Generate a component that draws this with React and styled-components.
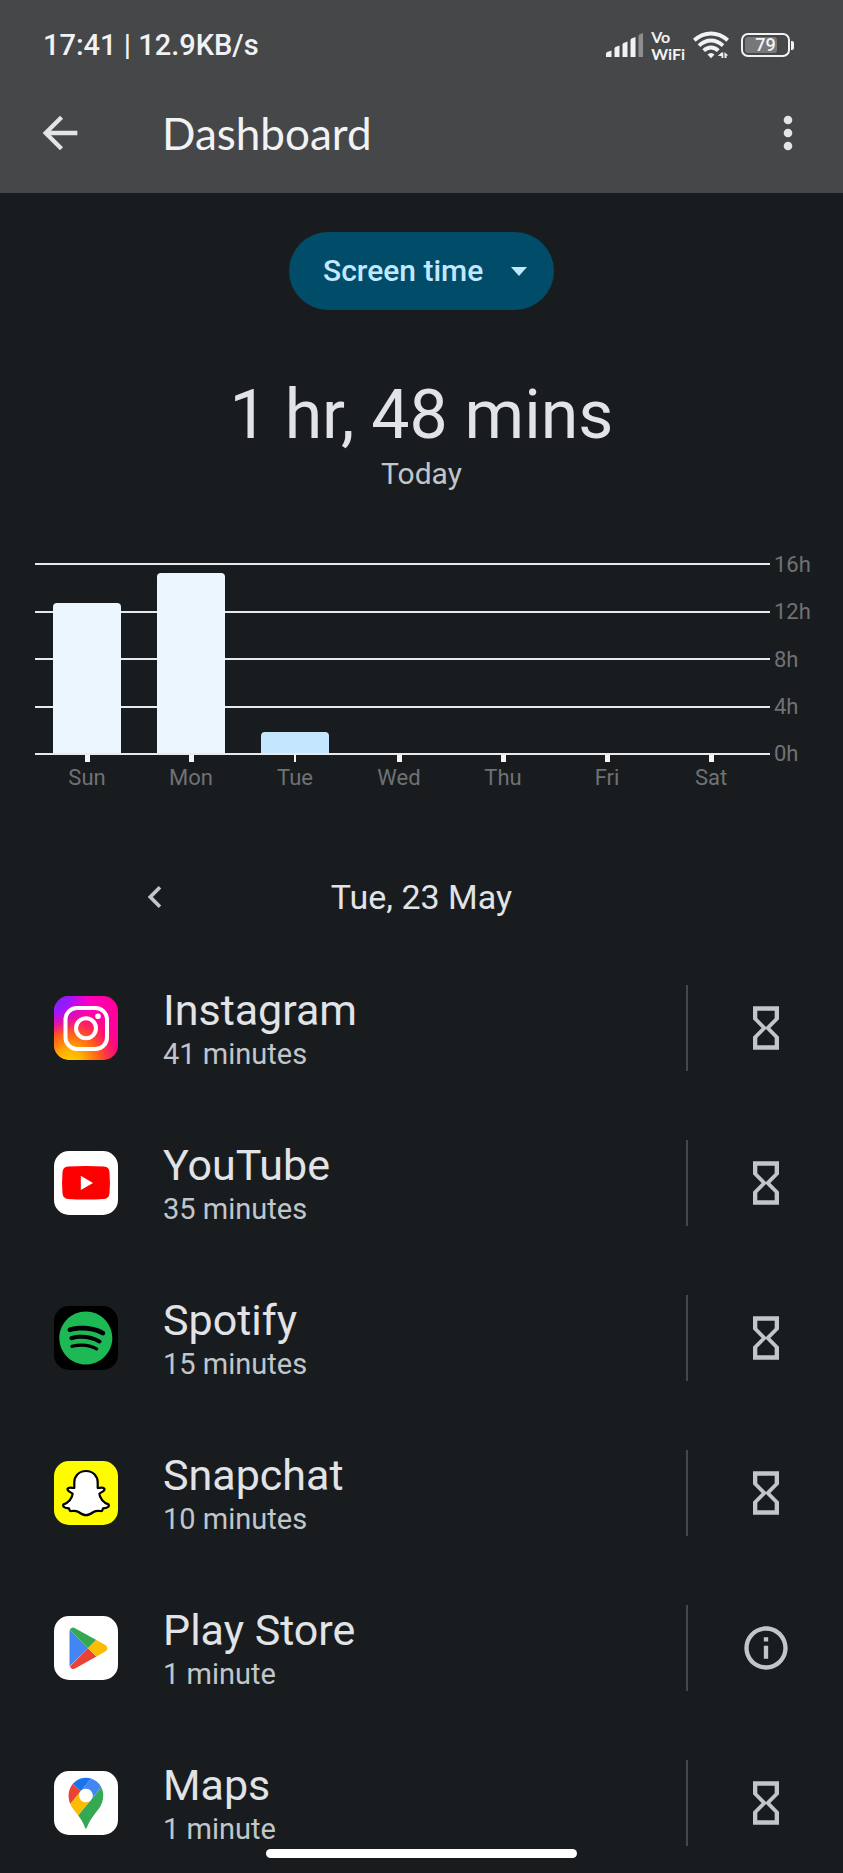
import React from 'react';
import styled, { createGlobalStyle } from 'styled-components';
import {
  MdArrowBack,
  MdChevronLeft,
  MdHourglassEmpty,
  MdInfoOutline,
  MdMoreVert,
} from 'react-icons/md';

const GlobalStyle = createGlobalStyle`
  * { box-sizing: border-box; }
  body {
    margin: 0;
    background: #191c1f;
    color: #e1e3e7;
    font-family: Roboto, "Liberation Sans", sans-serif;
  }
`;

const Screen = styled.div`
  display: flex;
  flex-direction: column;
  height: 100vh;
  background: #191c1f;
`;

const Header = styled.header`
  flex: none;
  padding-top: 17px;
  background: #464749;
`;

const StatusBar = styled.div`
  display: flex;
  align-items: center;
  justify-content: space-between;
  height: 56px;
  padding: 0 49px 0 43px;
  color: #f1f2f4;
  font-size: 29px;
  font-weight: 500;
`;

const StatusIcons = styled.div`
  display: flex;
  align-items: center;
  gap: 8px;
`;

const VoWifi = styled.span`
  display: flex;
  flex-direction: column;
  font-family: Lato, sans-serif;
  font-size: 16px;
  font-weight: 700;
  line-height: 17px;
`;

const Battery = styled.span`
  display: flex;
  align-items: center;
  gap: 1px;
  margin-left: 4px;
`;

const BatteryCase = styled.span`
  display: grid;
  width: 49px;
  height: 24px;
  padding: 2px;
  border: 2px solid #f1f2f4;
  border-radius: 7px;
`;

const BatteryLevel = styled.span`
  grid-area: 1 / 1;
  width: ${(p) => p.$percent}%;
  border-radius: 3px;
  background: #77787a;
`;

const BatteryText = styled.span`
  grid-area: 1 / 1;
  font-size: 18px;
  line-height: 16px;
  text-align: center;
`;

const BatteryTip = styled.span`
  width: 3px;
  height: 9px;
  border-radius: 0 2px 2px 0;
  background: #f1f2f4;
`;

const AppBar = styled.div`
  display: flex;
  align-items: center;
  height: 120px;
  padding: 0 29px 0 34px;
`;

const IconButton = styled.button`
  display: grid;
  place-items: center;
  flex: none;
  width: 52px;
  height: 52px;
  padding: 0;
  border: 0;
  background: none;
  color: ${(p) => p.$color || '#e3e4e6'};
  cursor: pointer;
`;

const Title = styled.h1`
  flex: 1;
  margin: 0;
  padding-left: 76px;
  color: #f1f2f4;
  font-family: Lato, Roboto, sans-serif;
  font-size: 44px;
  font-weight: 400;
  line-height: 52px;
`;

const Main = styled.main`
  flex: 1;
  min-height: 0;
  padding-top: 39px;
  overflow-y: auto;
  scrollbar-width: none;
`;

const Picker = styled.div`
  display: grid;
  width: 265px;
  height: 78px;
  margin: 0 auto;
  border-radius: 39px;
  background: #004c69;
  color: #c2e8ff;
`;

const PickerSelect = styled.select`
  grid-area: 1 / 1;
  padding: 0 72px 2px 34px;
  border: 0;
  border-radius: 39px;
  appearance: none;
  background: transparent;
  color: inherit;
  font: 500 30px Roboto, sans-serif;
`;

const PickerArrow = styled.svg`
  grid-area: 1 / 1;
  place-self: center end;
  margin-right: 29px;
  pointer-events: none;
`;

const Total = styled.h2`
  margin: 65px 0 0;
  font-size: 68px;
  font-weight: 400;
  line-height: 80px;
  text-align: center;
`;

const TotalCaption = styled.p`
  margin: 0;
  color: #c1c6cb;
  font-size: 30px;
  line-height: 38px;
  text-align: center;
`;

const Chart = styled.section`
  display: grid;
  grid-template-columns: 1fr 69px;
  column-gap: 4px;
  margin-top: 58px;
  padding-left: 35px;
  color: #6f7275;
  font-size: 22px;
`;

const Plot = styled.div`
  display: grid;
  height: 192px;
  margin-top: 12px;
`;

const GridLines = styled.div`
  display: flex;
  flex-direction: column;
  justify-content: space-between;
  grid-area: 1 / 1;
`;

const GridLine = styled.div`
  height: 2px;
  background: #e8eaec;
`;

const Bars = styled.div`
  display: flex;
  grid-area: 1 / 1;
  padding: 2px 7px 2px 0;
`;

const BarSlot = styled.div`
  display: flex;
  align-items: flex-end;
  justify-content: center;
  flex: 1;
`;

const Bar = styled.div`
  width: 65%;
  border-radius: 4px 4px 0 0;
  background: ${(p) => (p.$selected ? '#c4e7ff' : '#ebf6ff')};
`;

const HourLabels = styled.div`
  display: flex;
  flex-direction: column;
  justify-content: space-between;
  height: 216px;
  margin-bottom: -12px;
  line-height: 27px;
`;

const Days = styled.div`
  display: flex;
  padding-right: 7px;
`;

const Day = styled.div`
  display: flex;
  flex: 1;
  flex-direction: column;
  align-items: center;
  gap: 2px;
  line-height: 28px;
`;

const Tick = styled.span`
  width: ${(p) => (p.$selected ? 2 : 5)}px;
  height: 7px;
  background: #f3f5f7;
`;

const DateNav = styled.nav`
  display: grid;
  grid-template-columns: 52px 1fr 52px;
  align-items: center;
  height: 56px;
  margin-top: 77px;
  padding: 0 129px;
  font-size: 34px;
  text-align: center;
`;

const AppList = styled.ul`
  margin: 25px 0 0;
  padding: 0;
  list-style: none;
`;

const AppRow = styled.li`
  display: flex;
  align-items: center;
  height: 155px;
  padding-left: 54px;
`;

const AppIcon = styled.svg`
  flex: none;
  width: 64px;
  height: 64px;
`;

const AppText = styled.div`
  flex: 1;
  padding: 2px 0 0 45px;
`;

const AppName = styled.div`
  font-size: 43px;
  line-height: 50px;
`;

const AppTime = styled.div`
  color: #c1c6cb;
  font-size: 29px;
  line-height: 38px;
`;

const AppAction = styled.div`
  display: grid;
  place-items: center;
  width: 157px;
  height: 86px;
  border-left: 2px solid #44484b;
`;

const HomeIndicator = styled.div`
  position: fixed;
  bottom: 15px;
  left: 0;
  right: 0;
  width: 37%;
  height: 9px;
  margin: 0 auto;
  border-radius: 5px;
  background: #fff;
`;

const Tile = ({ fill }) => <rect width="64" height="64" rx="15" fill={fill} />;

const InstagramIcon = () => (
  <AppIcon viewBox="0 0 64 64" aria-hidden="true">
    <defs>
      <linearGradient id="ig-base" x1="0" y1="0" x2="1" y2="0">
        <stop offset="0" stopColor="#d800d8" />
        <stop offset=".5" stopColor="#ff00c0" />
        <stop offset="1" stopColor="#ff0098" />
      </linearGradient>
      <radialGradient id="ig-warm" cx=".25" cy="1.05" r=".95">
        <stop offset="0" stopColor="#ffd600" />
        <stop offset=".22" stopColor="#ffb000" />
        <stop offset=".5" stopColor="#ff5a1c" />
        <stop offset=".75" stopColor="#ff1464" stopOpacity=".8" />
        <stop offset="1" stopColor="#ff00a0" stopOpacity="0" />
      </radialGradient>
      <radialGradient id="ig-cool" cx="0" cy="0" r=".6">
        <stop offset="0" stopColor="#6a2cff" />
        <stop offset=".4" stopColor="#9a18ff" />
        <stop offset="1" stopColor="#e000e0" stopOpacity="0" />
      </radialGradient>
    </defs>
    <Tile fill="url(#ig-base)" />
    <Tile fill="url(#ig-warm)" />
    <Tile fill="url(#ig-cool)" />
    <g fill="none" stroke="#fff" strokeWidth="4">
      <rect x="11.5" y="12" width="41.5" height="41" rx="11.5" />
      <circle cx="32" cy="32.3" r="10" />
    </g>
    <circle cx="44" cy="20.3" r="2.8" fill="#fff" />
  </AppIcon>
);

const YouTubeIcon = () => (
  <AppIcon viewBox="0 0 64 64" aria-hidden="true">
    <Tile fill="#fff" />
    <path
      fill="#f00"
      d="M14 15.6Q32 14.4 50 15.6Q55 16 55.5 21Q56.4 31.8 55.5 42.6Q55 47.6 50 48Q32 49.2 14 48Q9 47.6 8.5 42.6Q7.6 31.8 8.5 21Q9 16 14 15.6Z"
    />
    <path fill="#fff" d="M26.8 24.8v14.2L39 31.9z" />
  </AppIcon>
);

const SpotifyIcon = () => (
  <AppIcon viewBox="0 0 64 64" aria-hidden="true">
    <Tile fill="#000" />
    <path
      transform="translate(5.3 5.5) scale(2.21)"
      fill="#1db954"
      d="M12 0C5.4 0 0 5.4 0 12s5.4 12 12 12 12-5.4 12-12S18.66 0 12 0zm5.521 17.34c-.24.359-.66.48-1.021.24-2.82-1.74-6.36-2.101-10.561-1.141-.418.122-.779-.179-.899-.539-.12-.421.18-.78.54-.9 4.56-1.021 8.52-.6 11.64 1.32.42.18.479.659.301 1.02zm1.44-3.3c-.301.42-.841.6-1.262.3-3.239-1.98-8.159-2.58-11.939-1.38-.479.12-1.02-.12-1.14-.6-.12-.48.12-1.021.6-1.141C9.6 9.9 15 10.561 18.72 12.84c.361.181.54.78.241 1.2zm.12-3.36C15.24 8.4 8.82 8.16 5.16 9.301c-.6.179-1.2-.181-1.38-.721-.18-.601.18-1.2.72-1.381 4.26-1.26 11.28-1.02 15.721 1.621.539.3.719 1.02.419 1.56-.299.421-1.02.599-1.559.3z"
    />
  </AppIcon>
);

const SnapchatIcon = () => (
  <AppIcon viewBox="0 0 64 64" aria-hidden="true">
    <Tile fill="#fffc00" />
    <path
      fill="#fff"
      stroke="#000"
      strokeWidth="2.2"
      strokeLinejoin="round"
      d="M32 10C24.500 10 20.300 15.500 20.300 21.500V27C18 27 14.500 25.600 13.500 28C13 30.300 17 31 18.600 32.800C18.600 37 14 42 9.500 43.400C8 45.600 11 47 15 47.400C15.500 49.600 16 50.300 17.500 50C20 49.600 22 49.500 24.500 51C27 52.800 29 54.200 32 54.200C35 54.200 37 52.800 39.500 51C42 49.500 44 49.600 46.500 50C48 50.300 48.500 49.600 49 47.400C53 47 56 45.600 54.500 43.400C50 42 45.400 37 45.400 32.800C47 31 51 30.300 50.500 28C49.500 25.600 46 27 43.700 27V21.500C43.700 15.500 39.500 10 32 10Z"
    />
  </AppIcon>
);

const PlayStoreIcon = () => (
  <AppIcon viewBox="0 0 64 64" aria-hidden="true">
    <defs>
      <clipPath id="play-shape">
        <path d="M15.500 15.500Q15.500 12.500 18 11.700Q19.500 11.200 21.500 12.400L50.500 28.500Q53.500 30.300 53.500 32.200Q53.500 34.200 50.500 36L21.500 52.300Q19.500 53.400 18 52.900Q15.500 52 15.500 49Z" />
      </clipPath>
    </defs>
    <Tile fill="#fff" />
    <g clipPath="url(#play-shape)">
      <path fill="#4285f4" d="M10 8v48L34 32.200z" />
      <path fill="#34a853" d="M15.500 13.500L12 6H60L34 32.200z" />
      <path fill="#ea4335" d="M15.500 51L12 58H60L34 32.200z" />
      <path fill="#fbbc04" d="M34 32.200L48 18H60V46H48z" />
    </g>
  </AppIcon>
);

const MapsIcon = () => (
  <AppIcon viewBox="0 0 64 64" aria-hidden="true">
    <Tile fill="#fff" />
    <g transform="translate(14.600 6.700) scale(.375 .385)">
      <path fill="#1a73e8" d="M60.2 2.2C55.8.8 51 0 46.1 0 32 0 19.3 6.4 10.8 16.5l21.8 18.3L60.2 2.2z" />
      <path fill="#ea4335" d="M10.8 16.5C4.100 24.500 0 34.900 0 46.100c0 8.700 1.700 15.700 4.600 22l28-33.300-21.800-18.300z" />
      <path fill="#4285f4" d="M46.200 28.500c9.800 0 17.700 7.900 17.700 17.700 0 4.300-1.600 8.300-4.200 11.400 0 0 13.900-16.600 27.500-32.700-5.600-10.800-15.300-19-27-22.700L32.600 34.800c3.300-3.800 8.100-6.300 13.600-6.300" />
      <path fill="#fbbc04" d="M46.200 63.800c-9.800 0-17.700-7.900-17.700-17.700 0-4.300 1.500-8.300 4.100-11.300l-28 33.300c4.800 10.600 12.800 19.200 21 29.900l34.100-40.500c-3.300 3.900-8.100 6.300-13.500 6.300" />
      <path fill="#34a853" d="M59.100 109.200c15.400-24.100 33.300-35 33.300-63 0-7.700-1.900-14.900-5.200-21.300L25.600 98c2.600 3.400 5.300 7.300 7.900 11.300 9.400 14.500 9.800 23.100 12.800 23.100s3.400-8.700 12.800-23.200" />
    </g>
    <circle cx="31.900" cy="24.400" r="6.700" fill="#fff" />
  </AppIcon>
);

const SignalIcon = () => (
  <svg width="37" height="24" viewBox="0 0 37 24" aria-hidden="true" fill="#f1f2f4">
    <path d="M0 24v-3.500q0-1 1.200-1.500L5.500 17.500V24z" />
    <path d="M8.500 24V15.500q0-1 1-1.500L13.500 12.500V24z" />
    <path d="M16.500 24V11.500q0-1 1-1.500L21.500 8.500V24z" />
    <path d="M24.500 24V7q0-1 1-1.500L29.500 4V24z" />
    <path fill="#8d8e90" d="M32.500 24V3q0-1 1-1.500L37 0V24z" />
  </svg>
);

const WifiIcon = () => (
  <svg width="36" height="28" viewBox="0 0 36 28" aria-hidden="true">
    <g fill="none" stroke="#f1f2f4" strokeWidth="3.900">
      <path d="M1.300 9.300Q9 2.500 18 2.500T34.700 9.300" />
      <path d="M6 14.600Q11.500 9.500 18 9.500T30 14.600" />
      <path d="M10.700 19.600Q14 16.500 18 16.500T25.300 19.600" />
    </g>
    <path fill="#f1f2f4" d="M14.500 23.500Q18 20.500 21.500 23.500L18 27.300z" />
    <path
      fill="#f1f2f4"
      d="M28.500 21.500h1.800v5.500h-1.800v-2h-3.700zM31.500 27v-6l3.700 3.500h-1.700V27z"
    />
  </svg>
);

const HOURS = ['16h', '12h', '8h', '4h', '0h'];

const DAYS = [
  { name: 'Sun', hours: 12.8 },
  { name: 'Mon', hours: 15.3 },
  { name: 'Tue', hours: 1.8, selected: true },
  { name: 'Wed', hours: 0 },
  { name: 'Thu', hours: 0 },
  { name: 'Fri', hours: 0 },
  { name: 'Sat', hours: 0 },
];

const APPS = [
  { name: 'Instagram', time: '41 minutes', Icon: InstagramIcon },
  { name: 'YouTube', time: '35 minutes', Icon: YouTubeIcon },
  { name: 'Spotify', time: '15 minutes', Icon: SpotifyIcon },
  { name: 'Snapchat', time: '10 minutes', Icon: SnapchatIcon },
  { name: 'Play Store', time: '1 minute', Icon: PlayStoreIcon, info: true },
  { name: 'Maps', time: '1 minute', Icon: MapsIcon },
];

export default function App() {
  return (
    <Screen>
      <GlobalStyle />
      <Header>
        <StatusBar>
          <span>17:41 | 12.9KB/s</span>
          <StatusIcons>
            <SignalIcon />
            <VoWifi>
              <span>Vo</span>
              <span>WiFi</span>
            </VoWifi>
            <WifiIcon />
            <Battery>
              <BatteryCase>
                <BatteryLevel $percent={79} />
                <BatteryText>79</BatteryText>
              </BatteryCase>
              <BatteryTip />
            </Battery>
          </StatusIcons>
        </StatusBar>
        <AppBar>
          <IconButton aria-label="Back">
            <MdArrowBack size={52} />
          </IconButton>
          <Title>Dashboard</Title>
          <IconButton aria-label="More options">
            <MdMoreVert size={52} />
          </IconButton>
        </AppBar>
      </Header>

      <Main>
        <Picker>
          <PickerSelect aria-label="Usage type" defaultValue="screen">
            <option value="screen">Screen time</option>
          </PickerSelect>
          <PickerArrow width="16" height="9" viewBox="0 0 16 9" aria-hidden="true">
            <path fill="currentColor" d="M0 0h16L8 9z" />
          </PickerArrow>
        </Picker>

        <Total>1 hr, 48 mins</Total>
        <TotalCaption>Today</TotalCaption>

        <Chart aria-label="Screen time this week">
          <Plot>
            <GridLines>
              {HOURS.map((hour) => (
                <GridLine key={hour} />
              ))}
            </GridLines>
            <Bars>
              {DAYS.map((day) => (
                <BarSlot key={day.name}>
                  <Bar $selected={day.selected} style={{ height: `${(day.hours / 16) * 100}%` }} />
                </BarSlot>
              ))}
            </Bars>
          </Plot>
          <HourLabels>
            {HOURS.map((hour) => (
              <span key={hour}>{hour}</span>
            ))}
          </HourLabels>
          <Days>
            {DAYS.map((day) => (
              <Day key={day.name}>
                <Tick $selected={day.selected} />
                {day.name}
              </Day>
            ))}
          </Days>
        </Chart>

        <DateNav aria-label="Day">
          <IconButton aria-label="Previous day" $color="#c1c6cb">
            <MdChevronLeft size={44} />
          </IconButton>
          <span>Tue, 23 May</span>
        </DateNav>

        <AppList>
          {APPS.map(({ name, time, Icon, info }) => (
            <AppRow key={name}>
              <Icon />
              <AppText>
                <AppName>{name}</AppName>
                <AppTime>{time}</AppTime>
              </AppText>
              <AppAction>
                <IconButton
                  $color="#c1c6cb"
                  aria-label={info ? `About ${name}` : `Set timer for ${name}`}
                >
                  {info ? <MdInfoOutline size={52} /> : <MdHourglassEmpty size={52} />}
                </IconButton>
              </AppAction>
            </AppRow>
          ))}
        </AppList>
      </Main>
      <HomeIndicator />
    </Screen>
  );
}
